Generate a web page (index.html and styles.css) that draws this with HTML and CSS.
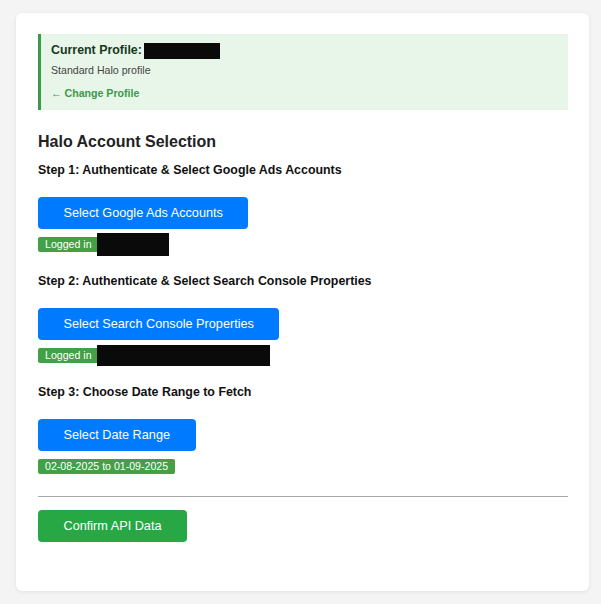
FILE: index.html
```html
<!DOCTYPE html>
<html>
<head>
<meta charset="utf-8">
<link rel="stylesheet" href="styles.css">
</head>
<body>
<div class="card">
  <div class="profile">
    <div class="profile-title"><strong>Current Profile:</strong><span class="redact r-profile"></span></div>
    <div class="profile-desc">Standard Halo profile</div>
    <a class="profile-link" href="#">&larr; Change Profile</a>
  </div>

  <h2 class="title">Halo Account Selection</h2>

  <section class="step">
    <h3 class="step-title">Step 1: Authenticate &amp; Select Google Ads Accounts</h3>
    <button class="btn btn-blue">Select Google Ads Accounts</button>
    <div class="status"><span class="badge badge-user">Logged in<span class="redact r-ads"></span></span></div>
  </section>

  <section class="step">
    <h3 class="step-title">Step 2: Authenticate &amp; Select Search Console Properties</h3>
    <button class="btn btn-blue">Select Search Console Properties</button>
    <div class="status"><span class="badge badge-user">Logged in<span class="redact r-sc"></span></span></div>
  </section>

  <section class="step">
    <h3 class="step-title">Step 3: Choose Date Range to Fetch</h3>
    <button class="btn btn-blue">Select Date Range</button>
    <div class="status"><span class="badge">02-08-2025 to 01-09-2025</span></div>
  </section>

  <hr class="divider">

  <button class="btn btn-green">Confirm API Data</button>
</div>
</body>
</html>
```
FILE: styles.css
```css
* { box-sizing: border-box; }
html, body { margin: 0; padding: 0; }
body {
  background: #f4f4f4;
  font-family: "Liberation Sans", Arial, sans-serif;
  color: #222;
  padding: 13px 12px 13px 16px;
}
.card {
  background: #fff;
  border-radius: 6px;
  box-shadow: 0 1px 4px rgba(0,0,0,0.08);
  padding: 21px 21px 49px 22px;
}
.profile {
  background: #e8f5e9;
  border-left: 3px solid #3a9a4a;
  padding: 9px 12px 10px 10px;
}
.profile-title {
  display: flex;
  align-items: center;
  font-size: 12.4px;
  line-height: 15px;
  height: 15px;
  color: #173a1c;
}
.redact {
  display: inline-block;
  background: #0a0a0a;
}
.r-profile { width: 76px; height: 16px; margin-left: 2px; }
.profile-desc {
  font-size: 10.6px;
  line-height: 13px;
  color: #444;
  margin-top: 6px;
}
.profile-link {
  display: block;
  font-size: 10.6px;
  line-height: 13px;
  font-weight: bold;
  color: #3a9a4a;
  text-decoration: none;
  margin-top: 10px;
}
.title {
  font-size: 16px;
  line-height: 19px;
  font-weight: bold;
  margin: 22px 0 0;
  color: #222;
}
.step-title {
  font-size: 12.4px;
  line-height: 15px;
  font-weight: bold;
  margin: 12px 0 0;
  color: #111;
}
.step + .step .step-title { margin-top: 18px; }
.btn {
  display: block;
  border: none;
  border-radius: 4px;
  color: #fff;
  font-family: "Liberation Sans", Arial, sans-serif;
  font-size: 12.7px;
  line-height: 16px;
  padding: 8px 25.5px;
  cursor: pointer;
}
.btn-blue { background: #007bff; margin-top: 19px; }
.btn-green { background: #28a745; }
.status {
  display: flex;
  align-items: center;
  margin-top: 4px;
  height: 23px;
}
.badge {
  display: inline-flex;
  align-items: center;
  height: 15px;
  background: #43a047;
  color: #fff;
  font-size: 10.6px;
  line-height: 13px;
  padding: 0 7px;
  border-radius: 2px;
}
.badge-user { padding-right: 0; }
.r-ads { width: 72px; height: 23px; margin-left: 5px; }
.r-sc { width: 173px; height: 21px; margin-left: 5px; }
.divider {
  border: none;
  border-top: 1px solid #aaa;
  margin: 18px 0 13px;
}
```
